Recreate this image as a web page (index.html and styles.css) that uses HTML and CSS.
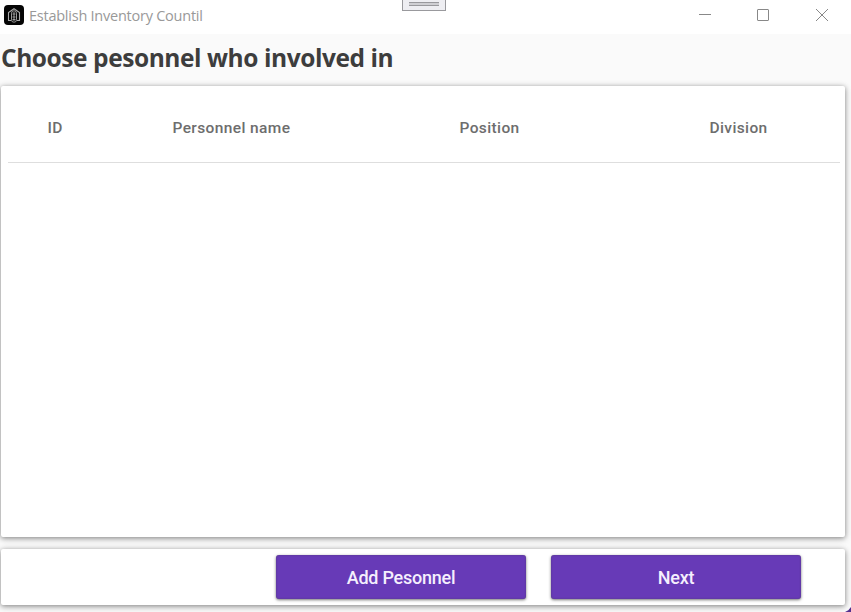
FILE: index.html
```html
<!DOCTYPE html>
<html lang="en">
<head>
<meta charset="utf-8">
<title>Establish Inventory Countil</title>
<link rel="stylesheet" href="styles.css">
</head>
<body>
<div class="window">
  <header class="titlebar">
    <svg class="app-icon" width="20" height="20" viewBox="0 0 20 20" fill="none">
      <rect width="20" height="20" rx="4" fill="#050505"/>
      <path d="M7 15.500H4.500V7.500L10 3.700l5.500 3.800v8H13" stroke="#aaa" stroke-width="1.100"/>
      <rect x="7.500" y="5.800" width="5" height="11.400" rx="2.400" stroke="#999"/>
      <path d="M10 7v9M8.500 9h3M8.500 12h3M8.500 14.500h3" stroke="#aaa" stroke-width=".9"/>
    </svg>
    <span class="title">Establish Inventory Countil</span>
    <div class="controls">
      <svg width="12" height="12" viewBox="0 0 12 12"><path d="M0 5.500h12"/></svg>
      <svg width="12" height="12" viewBox="0 0 12 12"><rect x=".5" y=".5" width="11" height="11" rx=".5"/></svg>
      <svg width="12" height="12" viewBox="0 0 12 12"><path d="M0 0l12 12M12 0L0 12"/></svg>
    </div>
    <div class="handle"><i></i></div>
  </header>
  <h1><span>Choose pesonnel who involved in</span></h1>
  <main class="card table">
    <div class="head">
      <span>ID</span><span>Personnel name</span><span>Position</span><span>Division</span>
    </div>
  </main>
  <footer class="card actions">
    <button>Add Pesonnel</button>
    <button>Next</button>
  </footer>
  <div class="corner"></div>
</div>
</body>
</html>
```

FILE: styles.css
```css
* { box-sizing: border-box; }
body { margin: 0; background: #fafafa; }
.window {
  position: relative;
  width: 851px;
  height: 612px;
  overflow: hidden;
  display: flex;
  flex-direction: column;
}
.titlebar {
  position: relative;
  height: 34px;
  flex: none;
  background: #fff;
  display: flex;
  align-items: flex-start;
  padding: 5px 23px 0 4px;
}
.title {
  margin-left: 5px;
  font: 14.500px/22px "Open Sans", sans-serif;
  letter-spacing: -0.240px;
  color: #999;
  white-space: nowrap;
}
.controls {
  display: flex;
  margin: 4px 0 0 auto;
}
.controls svg {
  display: block;
  fill: none;
  stroke: #888;
  stroke-width: 1;
}
.controls svg:nth-child(2) {
  margin: 0 47px 0 46px;
}
.handle {
  position: absolute;
  left: 402px;
  top: 0;
  width: 44px;
  height: 11px;
  border: 1px solid #99999d;
  border-top: 0;
  background: #eeeef2;
  padding: 2px 6px;
}
.handle i {
  display: block;
  height: 4px;
  border: solid #99999d;
  border-width: 1px 0;
  background: #cfcfd3;
}
h1 {
  margin: 0;
  height: 52px;
  flex: none;
  padding-left: 1px;
  font: 700 24.500px/48px "Open Sans", sans-serif;
  letter-spacing: -0.430px;
  color: #3d3d3d;
  white-space: nowrap;
}
.card {
  flex: none;
  width: 844px;
  margin-left: 1px;
  background: #fff;
  border-radius: 2px;
  box-shadow: 0 1px 5px rgba(0, 0, 0, .4), 0 2px 8px rgba(0, 0, 0, .14);
}
.table {
  height: 451px;
  padding: 0 5px 0 7px;
}
.head {
  height: 77px;
  border-bottom: 1px solid #dedede;
  display: grid;
  grid-template-columns: 125px 287px 250px auto;
  padding: 31px 0 0 39.500px;
  font: 500 15.500px/22px Roboto, sans-serif;
  letter-spacing: .38px;
  color: #6d6d6d;
}
.actions {
  height: 56px;
  margin-top: 12px;
  padding: 6px 0 0 275px;
  display: flex;
  gap: 25px;
}
button {
  width: 250px;
  height: 44px;
  padding: 1px 0 0;
  border: 0;
  border-radius: 3px;
  background: #673ab7;
  box-shadow: 0 1px 3px rgba(0, 0, 0, .55), inset 0 0 2px rgba(70, 60, 90, .6);
  color: #f5effd;
  font: 500 18px/43px Roboto, sans-serif;
  letter-spacing: -.25px;
}
.corner {
  position: absolute;
  right: 0;
  bottom: 0;
  width: 6px;
  height: 5px;
  background: #52318f;
  clip-path: polygon(100% 0, 100% 100%, 0 100%, 55% 65%);
}
```
